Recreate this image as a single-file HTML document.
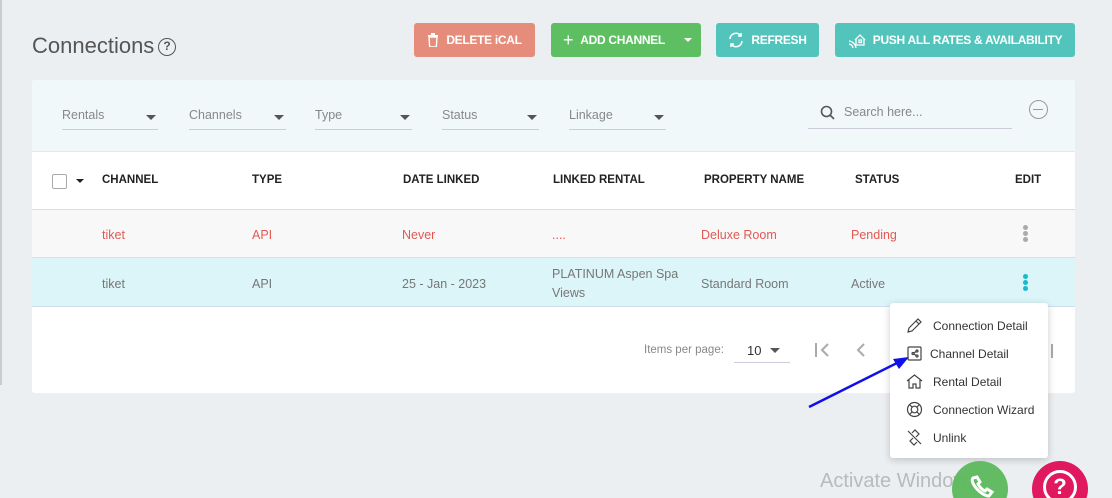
<!DOCTYPE html>
<html style="width:1112px;height:498px;overflow:hidden"><head><style>
*{box-sizing:border-box;margin:0;padding:0}
body{width:1112px;height:498px;background:#eceff2;font-family:"Liberation Sans",sans-serif;position:relative;overflow:hidden;color:#555}
.a{position:absolute}
.btn{position:absolute;top:23px;height:34px;border-radius:3px;color:#fff;font-weight:bold;font-size:12px;letter-spacing:-0.3px;white-space:nowrap;display:flex;align-items:center;justify-content:center;gap:7px}
.flt{position:absolute;top:108px;height:22px;border-bottom:1px solid #ccd;font-size:12.5px;color:#888}
.flt:after{content:"";position:absolute;right:2px;top:7px;border:5px solid transparent;border-top:5px solid #555}
.th{position:absolute;top:174px;font-size:11.5px;font-weight:bold;color:#222;white-space:nowrap}
.td{position:absolute;font-size:12.5px;white-space:nowrap}
.r1{top:228px;color:#e05a55}
.r2{top:277px;color:#777}
.mi{position:absolute;left:906px;font-size:12px;color:#333;display:flex;align-items:center;gap:10px;white-space:nowrap}
</style></head><body>
<div class="a" style="left:0;top:0;width:2px;height:385px;background:#ccc"></div>
<div class="a" style="left:32px;top:33px;font-size:22px;color:#555">Connections</div>
<div class="a" style="left:158px;top:38px;width:18px;height:18px;border:1.5px solid #555;border-radius:50%;font-size:12px;text-align:center;line-height:15px;color:#555;font-weight:bold">?</div>
<div class="btn" style="left:414px;width:121px;background:#e58c7a"><svg width="12" height="14" viewBox="0 0 12 14"><rect x="1" y="2" width="10" height="1.6" fill="#fff"/><rect x="4" y="0" width="4" height="2" fill="#fff"/><path d="M2 4h8l-.7 10H2.7z" fill="none" stroke="#fff" stroke-width="1.4"/></svg>DELETE iCAL</div>
<div class="btn" style="left:551px;width:150px;background:#5dbf61;justify-content:flex-start;padding-left:12px"><span style="font-size:18px;font-weight:normal">+</span>ADD CHANNEL<span style="margin-left:12px;border:4px solid transparent;border-top:4px solid #fff;margin-top:4px"></span></div>
<div class="btn" style="left:716px;width:103px;background:#52c4bc"><svg width="16" height="16" viewBox="0 0 16 16" fill="none" stroke="#fff" stroke-width="1.6"><path d="M2 7a6 6 0 0 1 11-3M14 9a6 6 0 0 1-11 3"/><path d="M13 1v3h-3M3 15v-3h3"/></svg>REFRESH</div>
<div class="btn" style="left:835px;width:240px;background:#52c4bc"><svg width="18" height="16" viewBox="0 0 18 16" fill="none" stroke="#fff" stroke-width="1.3"><path d="M7 8l5-5 5 5M8 7v6h8V7"/><rect x="11" y="8" width="2.5" height="2.5"/><path d="M1 12a5 5 0 0 1 4 4M1 9a8 8 0 0 1 7 7"/></svg>PUSH ALL RATES &amp; AVAILABILITY</div>

<div class="a" style="left:32px;top:80px;width:1043px;height:313px;background:#fff;border-radius:3px;overflow:hidden">
<div class="a" style="left:0;top:0;width:100%;height:72px;background:#f0f8fa;border-bottom:1px solid #d6eef4"></div>
<div class="a" style="left:0;top:129px;width:100%;height:49px;background:#f8f8f8;border-top:1px solid #ddd;border-bottom:1px solid #ddd"></div>
<div class="a" style="left:0;top:178px;width:100%;height:49px;background:#dcf5f8;border-bottom:1px solid #cde"></div>
</div>
<div class="flt" style="left:62px;width:96px">Rentals</div>
<div class="flt" style="left:189px;width:97px">Channels</div>
<div class="flt" style="left:315px;width:97px">Type</div>
<div class="flt" style="left:442px;width:97px">Status</div>
<div class="flt" style="left:569px;width:97px">Linkage</div>
<svg class="a" style="left:820px;top:105px" width="16" height="16" viewBox="0 0 16 16" fill="none" stroke="#555" stroke-width="1.6"><circle cx="6.5" cy="6.5" r="5"/><path d="M10 10l4 4"/></svg>
<div class="a" style="left:844px;top:105px;font-size:12.5px;color:#888">Search here...</div>
<div class="a" style="left:808px;top:128px;width:204px;height:1px;background:#ccd"></div>
<div class="a" style="left:1029px;top:100px;width:19px;height:19px;border:1.5px solid #999;border-radius:50%"><div class="a" style="left:3px;top:7.5px;width:10px;height:1.5px;background:#999"></div></div>

<div class="a" style="left:52px;top:174px;width:15px;height:15px;border:1px solid #aaa;border-radius:2px;background:#fff"></div>
<div class="a" style="left:76px;top:179px;border:4px solid transparent;border-top:4px solid #222"></div>
<div class="th" style="left:102px">CHANNEL</div>
<div class="th" style="left:252px">TYPE</div>
<div class="th" style="left:403px">DATE LINKED</div>
<div class="th" style="left:553px">LINKED RENTAL</div>
<div class="th" style="left:704px">PROPERTY NAME</div>
<div class="th" style="left:855px">STATUS</div>
<div class="th" style="left:1015px">EDIT</div>

<div class="td r1" style="left:102px">tiket</div>
<div class="td r1" style="left:252px">API</div>
<div class="td r1" style="left:402px">Never</div>
<div class="td r1" style="left:552px">....</div>
<div class="td r1" style="left:701px">Deluxe Room</div>
<div class="td r1" style="left:851px">Pending</div>
<div class="a" style="left:1023px;top:225px;width:5px;line-height:0"><div style="width:5px;height:5px;border-radius:50%;background:#aaa;margin-bottom:1px"></div><div style="width:5px;height:5px;border-radius:50%;background:#aaa;margin-bottom:1px"></div><div style="width:5px;height:5px;border-radius:50%;background:#aaa"></div></div>
<div class="td r2" style="left:102px">tiket</div>
<div class="td r2" style="left:252px">API</div>
<div class="td r2" style="left:402px">25 - Jan - 2023</div>
<div class="td" style="left:552px;top:265px;color:#777;line-height:19px">PLATINUM Aspen Spa<br>Views</div>
<div class="td r2" style="left:701px">Standard Room</div>
<div class="td r2" style="left:851px">Active</div>
<div class="a" style="left:1023px;top:274px;width:5px;line-height:0"><div style="width:5px;height:5px;border-radius:50%;background:#1bb8d0;margin-bottom:1px"></div><div style="width:5px;height:5px;border-radius:50%;background:#1bb8d0;margin-bottom:1px"></div><div style="width:5px;height:5px;border-radius:50%;background:#1bb8d0"></div></div>

<div class="a" style="left:644px;top:344px;font-size:11.5px;color:#888">Items per page:</div>
<div class="a" style="left:747px;top:343px;font-size:13px;color:#333">10</div>
<div class="a" style="left:770px;top:348px;border:5px solid transparent;border-top:5px solid #555"></div>
<div class="a" style="left:734px;top:362px;width:56px;height:1px;background:#ccd"></div>
<svg class="a" style="left:814px;top:342px" width="20" height="16" viewBox="0 0 20 16" fill="none" stroke="#aaa" stroke-width="2"><path d="M2 1v14M14 2l-6 6 6 6"/></svg>
<svg class="a" style="left:855px;top:342px" width="12" height="16" viewBox="0 0 12 16" fill="none" stroke="#aaa" stroke-width="2"><path d="M9 2L3 8l6 6"/></svg>
<div class="a" style="left:1051px;top:344px;width:2px;height:14px;background:#aaa"></div>

<div class="a" style="left:890px;top:303px;width:158px;height:155px;background:#fff;border-radius:3px;box-shadow:0 2px 8px rgba(0,0,0,.2)"></div>
<div class="mi" style="top:317px"><svg width="17" height="17" viewBox="0 0 17 17" fill="none" stroke="#444" stroke-width="1.2"><path d="M2 15l1-4 9-9 3 3-9 9zM10 4l3 3"/></svg>Connection Detail</div>
<div class="mi" style="top:345px;gap:7px"><svg width="17" height="17" viewBox="0 0 17 17" fill="none" stroke="#444" stroke-width="1.2"><rect x="2" y="2" width="13" height="13" rx="1"/><circle cx="7" cy="8.5" r="1"/><circle cx="11" cy="6" r="1"/><circle cx="11" cy="11" r="1"/><path d="M8 8l2-1.5M8 9l2 1.5"/></svg>Channel Detail</div>
<div class="mi" style="top:373px"><svg width="17" height="17" viewBox="0 0 17 17" fill="none" stroke="#444" stroke-width="1.2"><path d="M1 8l7.5-6L16 8M3 7v8h4v-4h3v4h4V7"/></svg>Rental Detail</div>
<div class="mi" style="top:401px"><svg width="17" height="17" viewBox="0 0 17 17" fill="none" stroke="#444" stroke-width="1.2"><circle cx="8.5" cy="8.5" r="7"/><circle cx="8.5" cy="8.5" r="3.3"/><path d="M3.5 3.5l2.7 2.7M13.5 3.5l-2.7 2.7M3.5 13.5l2.7-2.7M13.5 13.5l-2.7-2.7"/></svg>Connection Wizard</div>
<div class="mi" style="top:429px"><svg width="17" height="17" viewBox="0 0 17 17" fill="none" stroke="#444" stroke-width="1.2"><path d="M2 2l13 13M6 4l3-3 4 4-3 3M11 13l-3 3-4-4 3-3"/></svg>Unlink</div>

<svg class="a" style="left:805px;top:355px" width="105" height="55"><path d="M4 52L96 6" stroke="#1010e8" stroke-width="2.5"/><path d="M104 2L88 4l6 10z" fill="#1010e8"/></svg>

<div class="a" style="left:820px;top:470px;font-size:20px;color:#b8bbbe">Activate Windows</div>
<div class="a" style="left:952px;top:461px;width:56px;height:56px;border-radius:50%;background:#5cb85c;opacity:.95"></div>
<svg class="a" style="left:965px;top:472px" width="30" height="30" viewBox="0 0 30 30" fill="none" stroke="#fff" stroke-width="3"><path d="M8 6c-4 4 8 18 16 18l3-4-5-3-2 2c-3-1-6-5-7-7l2-2-3-5z"/></svg>
<div class="a" style="left:1032px;top:461px;width:56px;height:56px;border-radius:50%;background:#e0185e"></div>
<div class="a" style="left:1043px;top:470px;width:34px;height:34px;border:3.5px solid #fff;border-radius:50%;color:#fff;font-weight:bold;font-size:22px;text-align:center;line-height:28px">?</div>
</body></html>
